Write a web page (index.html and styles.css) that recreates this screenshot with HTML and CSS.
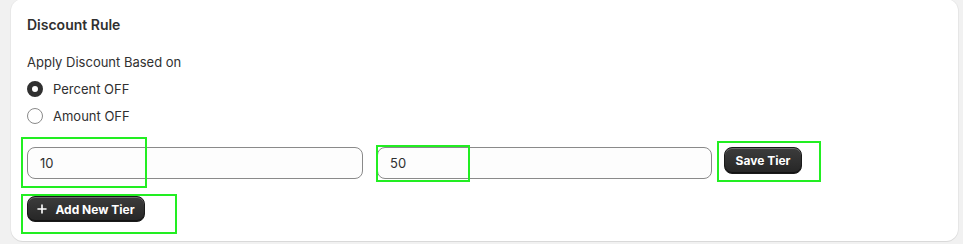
FILE: index.html
```html
<!DOCTYPE html>
<html>
<head>
<meta charset="utf-8">
<link rel="stylesheet" href="styles.css">
</head>
<body>
<div class="card">
  <h2 class="title">Discount Rule</h2>
  <div class="label">Apply Discount Based on</div>
  <div class="radios">
    <label class="radio-row"><span class="radio checked"></span><span>Percent OFF</span></label>
    <label class="radio-row"><span class="radio"></span><span>Amount OFF</span></label>
  </div>
  <div class="tier-row">
    <div class="input">10</div>
    <div class="input">50</div>
    <button class="btn btn-save">Save Tier</button>
  </div>
  <div class="add-row">
    <button class="btn btn-add"><svg class="plus" width="10" height="10" viewBox="0 0 10 10"><path d="M5 1v8M1 5h8" stroke="#fff" stroke-width="1.6" stroke-linecap="round"/></svg>Add New Tier</button>
  </div>
</div>
<div class="mark mark-1"></div>
<div class="mark mark-2"></div>
<div class="mark mark-3"></div>
<div class="mark mark-4"></div>
</body>
</html>
```
FILE: styles.css
```css
html, body {
  margin: 0;
  padding: 0;
  background: #f1f1f1;
  width: 963px;
  height: 244px;
  overflow: hidden;
  font-family: Inter, "Noto Sans", sans-serif;
  color: #303030;
}
.card {
  box-sizing: border-box;
  margin: -1px 0 0 11px;
  width: 947px;
  height: 242px;
  background: #fff;
  border-radius: 12px;
  box-shadow: 0 1px 0 #d9d9d9, 1px 0 0 #e6e6e6, -1px 0 0 #e8e8e8;
  padding: 16px 16px 0 16px;
}
.title {
  margin: 0;
  font-size: 14px;
  line-height: 20px;
  font-weight: 600;
}
.label {
  margin-top: 17px;
  font-size: 13px;
  line-height: 20px;
}
.radios {
  margin-top: 7px;
  display: flex;
  flex-direction: column;
  gap: 7px;
}
.radio-row {
  display: flex;
  align-items: center;
  gap: 10px;
  font-size: 13px;
  line-height: 20px;
  height: 20px;
}
.radio {
  box-sizing: border-box;
  width: 16px;
  height: 16px;
  border-radius: 50%;
  border: 1px solid #8a8a8a;
  background: #fff;
}
.radio.checked {
  border: 5px solid #303030;
}
.tier-row {
  margin-top: 21px;
  display: flex;
  align-items: flex-start;
}
.input {
  box-sizing: border-box;
  width: 336px;
  height: 32px;
  border: 1px solid #8a8a8a;
  border-radius: 8px;
  background: #fdfdfd;
  padding: 0 12px;
  font-size: 13px;
  line-height: 30px;
  margin-right: 14px;
}
.input + .input {
  width: 335px;
  margin-right: 12px;
}
.btn {
  box-sizing: border-box;
  font-family: Inter, "Noto Sans", sans-serif;
  font-size: 12px;
  font-weight: 700;
  color: #fff;
  border: 1px solid #1a1a1a;
  border-radius: 8px;
  background: linear-gradient(#3c3c3c, #262626);
  box-shadow: inset 0 1px 0 rgba(255,255,255,0.25), inset 0 -1px 0 rgba(0,0,0,0.5);
  padding: 0;
  display: flex;
  align-items: center;
  justify-content: center;
}
.btn-save {
  width: 78px;
  height: 27px;
}
.add-row {
  margin-top: 17px;
  display: flex;
}
.btn-add {
  width: 118px;
  height: 26px;
  gap: 8px;
}
.plus {
  display: block;
}
.mark {
  position: absolute;
  box-sizing: border-box;
  border: 2px solid #22ee22;
}
.mark-1 { left: 21px; top: 137px; width: 126px; height: 51px; }
.mark-2 { left: 376px; top: 145px; width: 94px; height: 37px; }
.mark-3 { left: 717px; top: 141px; width: 104px; height: 41px; }
.mark-4 { left: 21px; top: 194px; width: 156px; height: 40px; }
```
